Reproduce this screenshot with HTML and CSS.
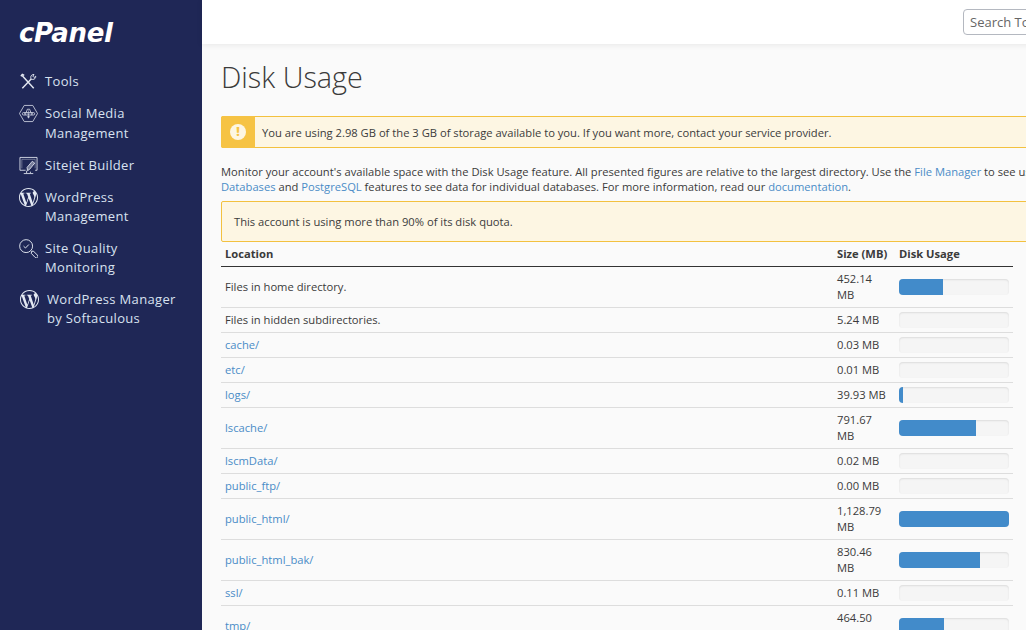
FILE: index.html
```html
<!doctype html>
<html>
<head>
	<title>Disk Usage</title>
	<meta charset="utf-8">
	<link rel="stylesheet" href="styles.css">
</head>

<body>
	<svg class="defs" width="0" height="0">
		<symbol id="wp" viewBox="0 0 24 24">
			<path fill="currentColor" d="M21.469 6.825c.84 1.537 1.318 3.3 1.318 5.175 0 3.979-2.156 7.456-5.363 9.325l3.295-9.527c.615-1.54.82-2.771.82-3.864 0-.405-.026-.78-.07-1.11m-7.981.105c.647-.03 1.232-.105 1.232-.105.582-.075.514-.93-.067-.899 0 0-1.755.135-2.88.135-1.064 0-2.85-.15-2.85-.15-.585-.03-.661.855-.075.885 0 0 .54.061 1.125.09l1.68 4.605-2.37 7.08L5.354 6.9c.649-.03 1.234-.1 1.234-.1.585-.075.516-.93-.065-.896 0 0-1.746.138-2.874.138-.2 0-.438-.008-.69-.015C4.911 3.15 8.235 1.215 12 1.215c2.809 0 5.365 1.072 7.286 2.833-.046-.003-.091-.009-.141-.009-1.06 0-1.812.923-1.812 1.914 0 .89.513 1.643 1.06 2.531.411.72.89 1.643.89 2.977 0 .915-.354 1.994-.821 3.479l-1.075 3.585-3.9-11.61.001.014zM12 22.784c-1.059 0-2.081-.153-3.048-.437l3.237-9.406 3.315 9.087c.024.053.05.101.078.149-1.12.393-2.325.609-3.582.609M1.211 12c0-1.564.336-3.05.935-4.39L7.29 21.709C3.694 19.96 1.212 16.271 1.211 12M12 0C5.385 0 0 5.385 0 12s5.385 12 12 12 12-5.385 12-12S18.615 0 12 0"/>
		</symbol>
	</svg>

	<div class="app">
		<nav class="sidebar">
			<div class="logo">cPanel</div>

			<a class="nav-item" href="#">
				<svg class="nav-icon" viewBox="0 0 20 20" fill="none" stroke="currentColor" stroke-width="1.5">
					<path d="M3.5 4 L15.5 17"/>
					<path d="M2 4.5 L3.5 2.5 L5.5 3.5"/>
					<path d="M3.5 17 L12.6 7.6"/>
					<path d="M15.8 2.6 a3 3 0 0 0 -3.4 3.2 l0.2 1.8 l1.8 0.2 a3 3 0 0 0 3.2 -3.4 l-1.6 1.4 l-1.4 -1.4 Z" stroke-width="1"/>
				</svg>
				<span>Tools</span>
			</a>
			<a class="nav-item" href="#">
				<svg class="nav-icon" viewBox="0 0 20 20" fill="none" stroke="currentColor" stroke-width="0.8">
					<path d="M5.5 1.5 H14.5 L19.5 10 L14.5 18.5 H5.5 L0.5 10 Z"/>
					<path d="M7.5 9 L8.8 5.5 H11.2 L12.5 9"/>
					<path d="M10 7 V8"/>
					<rect x="3.5" y="9" width="13" height="2.6" rx="1.3"/>
					<circle cx="6.5" cy="10.3" r="0.7"/>
					<circle cx="10" cy="10.3" r="0.7"/>
					<circle cx="13.5" cy="10.3" r="0.7"/>
					<path d="M10 12 V15 M8.5 13.5 H11.5"/>
				</svg>
				<span>Social Media<br>Management</span>
			</a>
			<a class="nav-item" href="#">
				<svg class="nav-icon" viewBox="0 0 20 20" fill="none" stroke="currentColor" stroke-width="0.9">
					<path d="M7 15 H1 V1.5 H19 V15 H17"/>
					<path d="M3 13 V3.5 H17 V13" stroke-width="0.4"/>
					<path d="M5 18.5 H15 M8 15.5 V18 M12 16.5 V18"/>
					<path d="M9 15.5 L8.5 12 L14 5.5 L16.5 7.5 L11.2 14 Z" fill="currentColor" fill-opacity="0.45"/>
				</svg>
				<span>Sitejet Builder</span>
			</a>
			<a class="nav-item" href="#">
				<svg class="nav-icon"><use href="#wp"/></svg>
				<span>WordPress<br>Management</span>
			</a>
			<a class="nav-item nav-item-snug" href="#">
				<svg class="nav-icon" viewBox="0 0 20 20" fill="none" stroke="currentColor" stroke-width="1">
					<circle cx="7.5" cy="7.5" r="6.8"/>
					<path d="M4.8 7.5 L6.8 9.5 L10.4 5.8"/>
					<path d="M12.6 12.4 L13.6 13.4"/>
					<path d="M13.6 13 L15 12.6 L19.4 17 A1.5 1.5 0 0 1 17 19.4 L12.8 15 Z"/>
				</svg>
				<span>Site Quality<br>Monitoring</span>
			</a>
			<a class="nav-item nav-item-wide" href="#">
				<svg class="nav-icon"><use href="#wp"/></svg>
				<span>WordPress Manager<br>by Softaculous</span>
			</a>
		</nav>

		<div class="main">
			<header class="topbar">
				<input class="search" type="text" placeholder="Search Tools">
			</header>

			<section class="content">
				<h1>Disk Usage</h1>

				<div class="alert alert-icon">
					<div class="alert-badge"><span>!</span></div>
					<div class="alert-text">You are using 2.98 GB of the 3 GB of storage available to you. If you want more, contact your service provider.</div>
				</div>

				<p class="intro">
					Monitor your account's available space with the Disk Usage feature. All presented figures are relative to the largest directory. Use the <a href="#">File Manager</a> to see usage within a directory.<br>
					<a href="#">Databases</a> and <a href="#">PostgreSQL</a> features to see data for individual databases. For more information, read our <a href="#">documentation</a>.
				</p>

				<div class="alert alert-plain">This account is using more than 90% of its disk quota.</div>

				<table class="usage">
					<thead>
						<tr><th>Location</th><th class="col-size">Size (MB)</th><th class="col-bar">Disk Usage</th></tr>
					</thead>
					<tbody>
						<tr><td>Files in home directory.</td><td>452.14 MB</td><td><div class="bar"><div class="fill" style="width: 40%"></div></div></td></tr>
						<tr><td>Files in hidden subdirectories.</td><td>5.24 MB</td><td><div class="bar"></div></td></tr>
						<tr><td><a href="#">cache/</a></td><td>0.03 MB</td><td><div class="bar"></div></td></tr>
						<tr><td><a href="#">etc/</a></td><td>0.01 MB</td><td><div class="bar"></div></td></tr>
						<tr><td><a href="#">logs/</a></td><td>39.93 MB</td><td><div class="bar"><div class="fill" style="width: 3.5%"></div></div></td></tr>
						<tr><td><a href="#">lscache/</a></td><td>791.67 MB</td><td><div class="bar"><div class="fill" style="width: 70%"></div></div></td></tr>
						<tr><td><a href="#">lscmData/</a></td><td>0.02 MB</td><td><div class="bar"></div></td></tr>
						<tr><td><a href="#">public_ftp/</a></td><td>0.00 MB</td><td><div class="bar"></div></td></tr>
						<tr><td><a href="#">public_html/</a></td><td>1,128.79 MB</td><td><div class="bar"><div class="fill" style="width: 100%"></div></div></td></tr>
						<tr><td><a href="#">public_html_bak/</a></td><td>830.46 MB</td><td><div class="bar"><div class="fill" style="width: 73.6%"></div></div></td></tr>
						<tr><td><a href="#">ssl/</a></td><td>0.11 MB</td><td><div class="bar"></div></td></tr>
						<tr><td><a href="#">tmp/</a></td><td>464.50 MB</td><td><div class="bar"><div class="fill" style="width: 41%"></div></div></td></tr>
					</tbody>
				</table>
			</section>
		</div>
	</div>
</body>

</html>
```

FILE: styles.css
```css
* {
	box-sizing: border-box;
}
html, body {
	height: 100%;
	margin: 0;
	overflow: hidden;
}
body {
	color: #3b3b3b;
	background: #fafafa;
	font: 11.19px/15px "Open Sans", sans-serif;
}
a {
	color: #4a8cc7;
	text-decoration: none;
}
.defs {
	position: absolute;
}
.app {
	display: flex;
	height: 100%;
}

/* sidebar */
.sidebar {
	flex: none;
	width: 202px;
	padding: 0 0 0 19px;
	background: #1f2756;
}
.logo {
	height: 66px;
	padding-top: 18px;
	color: #fff;
	font: italic 700 26px/30px "DejaVu Sans", sans-serif;
	letter-spacing: -0.3px;
}
.nav-item {
	display: flex;
	align-items: flex-start;
	gap: 7px;
	padding: 6px 0 6.5px;
	color: #d9e2f0;
	font-size: 13px;
	line-height: 19.5px;
	letter-spacing: 0.33px;
}
.nav-item-snug {
	margin-top: -0.4px;
}
.nav-icon {
	flex: none;
	width: 19px;
	height: 19px;
	color: #e4e9f2;
}
.nav-item-wide {
	gap: 8px;
	margin-top: -0.6px;
	padding-left: 1px;
}

/* main */
.main {
	flex: none;
	width: 1000px;
}
.topbar {
	display: flex;
	justify-content: flex-end;
	align-items: center;
	height: 44px;
	padding-right: 40px;
	background: #fff;
	box-shadow: 0 1px 6px rgba(0,0,0,0.08);
}
.search {
	width: 199px;
	height: 26px;
	padding: 0 6px;
	border: 1px solid #b4b8c0;
	border-radius: 4px;
	outline: none;
	background: #fff;
	font: 13px "Open Sans", sans-serif;
}
.search::placeholder {
	color: #666;
	opacity: 1;
}
.content {
	padding: 0 0 0 19px;
}
h1 {
	margin: 0;
	padding-top: 14px;
	height: 72px;
	color: #3b3b3b;
	font: 300 28.8px/38px "Open Sans", sans-serif;
}
.alert {
	border: 1px solid #f3c13f;
	border-radius: 2px;
	background: #fdf6e3;
}
.alert-icon {
	display: flex;
	height: 32px;
}
.alert-badge {
	display: flex;
	flex: none;
	align-items: center;
	justify-content: center;
	width: 34px;
	margin: -1px 0 -1px -1px;
	border-radius: 2px 0 0 2px;
	background: #f6c344;
}
.alert-badge span {
	width: 16px;
	height: 16px;
	border-radius: 50%;
	color: #f6c344;
	background: #fdf6e3;
	font: 800 12px/16px "Open Sans", sans-serif;
	text-align: center;
}
.alert-text {
	padding: 8px 0 0 7px;
}
.intro {
	margin: 16px 0 7px;
	white-space: nowrap;
}
.alert-plain {
	height: 41px;
	padding: 12px 12px 0;
}

/* table */
.usage {
	width: 792px;
	border-collapse: collapse;
	table-layout: fixed;
}
.usage th {
	padding: 4px;
	border-bottom: 1px solid #333;
	font-weight: 700;
	line-height: 16px;
	text-align: left;
}
.usage .col-size {
	width: 62px;
}
.usage .col-bar {
	width: 118px;
}
.usage td {
	padding: 4px;
	border-bottom: 1px solid #ddd;
	line-height: 16px;
	vertical-align: middle;
}
.bar {
	height: 16px;
	border-radius: 4px;
	overflow: hidden;
	background: #f5f5f5;
	box-shadow: inset 0 1px 2px rgba(0,0,0,0.1);
}
.fill {
	height: 100%;
	background: #428bca;
}
```
